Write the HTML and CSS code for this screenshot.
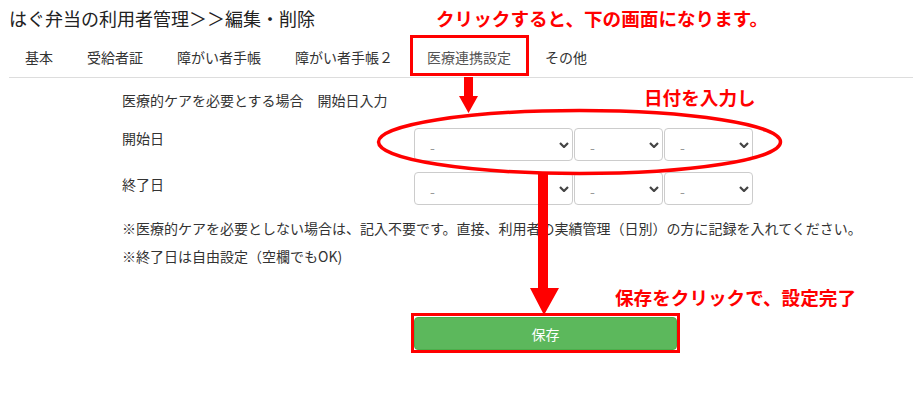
FILE: index.html
```html
<!DOCTYPE html>
<html lang="ja">
<head>
  <meta charset="UTF-8" />
  <meta name="viewport" content="width=device-width, initial-scale=1.0"/>
  <title>はぐ弁当の利用者管理</title>
  <link rel="stylesheet" href="styles.css">
</head>
<body>

  <div class="page">
    <h1 class="title">はぐ弁当の利用者管理＞＞編集・削除</h1>

    <ul class="tabs">
      <li><a>基本</a></li>
      <li><a>受給者証</a></li>
      <li><a>障がい者手帳</a></li>
      <li><a>障がい者手帳２</a></li>
      <li class="active"><a>医療連携設定</a></li>
      <li><a>その他</a></li>
    </ul>

    <div class="form">
      <p class="lead">医療的ケアを必要とする場合　開始日入力</p>

      <div class="row">
        <label>開始日</label>
        <div class="dates">
          <div class="pick year">
            <select><option>-</option></select>
            <svg viewBox="0 0 10 6"><path d="M1 1 L5 5 L9 1"/></svg>
          </div>
          <div class="pick">
            <select><option>-</option></select>
            <svg viewBox="0 0 10 6"><path d="M1 1 L5 5 L9 1"/></svg>
          </div>
          <div class="pick">
            <select><option>-</option></select>
            <svg viewBox="0 0 10 6"><path d="M1 1 L5 5 L9 1"/></svg>
          </div>
        </div>
      </div>

      <div class="row second">
        <label>終了日</label>
        <div class="dates">
          <div class="pick year">
            <select><option>-</option></select>
            <svg viewBox="0 0 10 6"><path d="M1 1 L5 5 L9 1"/></svg>
          </div>
          <div class="pick">
            <select><option>-</option></select>
            <svg viewBox="0 0 10 6"><path d="M1 1 L5 5 L9 1"/></svg>
          </div>
          <div class="pick">
            <select><option>-</option></select>
            <svg viewBox="0 0 10 6"><path d="M1 1 L5 5 L9 1"/></svg>
          </div>
        </div>
      </div>

      <p class="note first">※医療的ケアを必要としない場合は、記入不要です。直接、利用者の実績管理（日別）の方に記録を入れてください。</p>
      <p class="note">※終了日は自由設定（空欄でもOK)</p>

      <button class="save">保存</button>
    </div>

    <!-- red annotations drawn over the screen -->
    <div class="marks">
      <svg class="shapes" width="913" height="399" viewBox="0 0 913 399">
        <rect x="411.5" y="36.5" width="116" height="38" />
        <rect x="412.5" y="314.5" width="266" height="37" />
        <ellipse cx="579.5" cy="142" rx="201" ry="31.5" />
        <path class="solid" d="M464 77 H473 V96 H478 L468.5 113 L459 96 H464 Z" />
        <path class="solid" d="M538 174 H548 V288 H559 L544 315 L530 288 H538 Z" />
      </svg>
      <div class="say top">クリックすると、下の画面になります。</div>
      <div class="say date">日付を入力し</div>
      <div class="say done">保存をクリックで、設定完了</div>
    </div>
  </div>

</body>
</html>
```

FILE: styles.css
```css
body {
  margin: 0;
  font-family: "Noto Sans CJK JP", "Noto Sans", sans-serif;
  font-size: 14px;
  line-height: 20px;
  color: #333;
  background: #fff;
}

.page {
  position: relative;
  padding-left: 9px;
  width: 904px;
  height: 399px;
  overflow: hidden;
}

.title {
  margin: 0;
  padding-top: 5px;
  font-size: 18px;
  line-height: 27px;
  font-weight: normal;
  color: #222;
}

.tabs {
  display: flex;
  list-style: none;
  margin: 5px 0 0;
  padding: 0;
  border-bottom: 1px solid #ddd;
}

.tabs a {
  display: block;
  padding: 10px 16px;
  margin-right: 2px;
  color: #333;
  cursor: pointer;
}

.tabs .active a {
  color: #555;
}

.form {
  margin-left: 113px;
  padding-top: 12px;
}

.lead {
  margin: 0;
}

.row {
  display: flex;
  margin-top: 18px;
}

.row.second {
  margin-top: 11px;
}

.row.second label {
  padding-top: 2px;
}

.row label {
  width: 292px;
}

.dates {
  display: flex;
  gap: 1px;
}

.pick {
  position: relative;
  width: 89px;
}

.pick.year {
  width: 159px;
}

.pick select {
  appearance: none;
  -webkit-appearance: none;
  width: 100%;
  height: 33px;
  padding: 4px 16px 0 15px;
  border: 1px solid #ccc;
  border-radius: 4px;
  background: #fff;
  color: #999;
  font-family: inherit;
  font-size: 14px;
}

.pick svg {
  position: absolute;
  right: 4px;
  top: 14px;
  width: 10px;
  height: 6px;
  fill: none;
  stroke: #444;
  stroke-width: 2.2;
  pointer-events: none;
}

.note {
  margin: 8px 0 0;
}

.note.first {
  margin-top: 13px;
}

.save {
  display: block;
  margin: 51px 0 0 292px;
  width: 263px;
  height: 33px;
  background: #5cb85c;
  border: 1px solid #4cae4c;
  border-radius: 4px;
  color: #fff;
  font-family: inherit;
  font-size: 14px;
  cursor: pointer;
}

.marks {
  position: absolute;
  top: 0;
  left: 0;
  width: 913px;
  height: 399px;
  pointer-events: none;
}

.shapes {
  position: absolute;
  top: 0;
  left: 0;
  fill: none;
  stroke: #f00;
  stroke-width: 3.5;
}

.shapes rect {
  stroke-width: 3;
}

.shapes .solid {
  fill: #f00;
  stroke: none;
}

.say {
  position: absolute;
  color: #f00;
  font-size: 18.6px;
  line-height: 24px;
  font-weight: bold;
  white-space: nowrap;
}

.say.top {
  left: 436px;
  top: 6px;
}

.say.date {
  left: 644px;
  top: 85px;
}

.say.done {
  left: 615px;
  top: 285px;
}
```
